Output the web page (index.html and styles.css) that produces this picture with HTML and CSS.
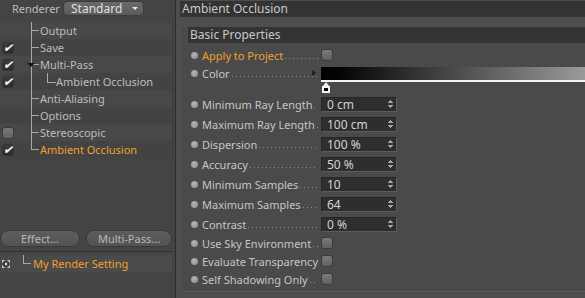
FILE: index.html
```html
<!DOCTYPE html>
<html lang="en">
<head>
    <meta charset="UTF-8">
    <title>Render Settings</title>
    <link rel="stylesheet" href="styles.css">
</head>
<body>
    <div class="app">
        <aside class="left">
            <div class="renderer">
                <span class="renderer-label">Renderer</span>
                <div class="select">Standard<span class="caret"></span></div>
            </div>

            <ul class="tree">
                <li class="row"><span class="check off"></span><span class="gutter"></span>Output</li>
                <li class="row"><span class="check on">&#10004;</span><span class="gutter"></span>Save</li>
                <li class="row"><span class="check on">&#10004;</span><span class="gutter open"><span class="tri"></span></span>Multi-Pass</li>
                <li class="row"><span class="check on">&#10004;</span><span class="gutter child"></span>Ambient Occlusion</li>
                <li class="row"><span class="check off"></span><span class="gutter"></span>Anti-Aliasing</li>
                <li class="row"><span class="check off"></span><span class="gutter"></span>Options</li>
                <li class="row"><span class="check empty"></span><span class="gutter"></span>Stereoscopic</li>
                <li class="row active"><span class="check on">&#10004;</span><span class="gutter last"></span>Ambient Occlusion</li>
            </ul>

            <div class="buttons">
                <button class="btn btn-effect">Effect...</button>
                <button class="btn btn-pass">Multi-Pass...</button>
            </div>
            <div class="sep"></div>
            <div class="setting">
                <svg class="rs-icon" width="8" height="8" viewBox="0 0 8 8">
                    <path d="M0.5 0.5h2M5.5 0.5h2M0.5 7.5h2M5.5 7.5h2M0.5 0.5v2M0.5 5.5v2M7.5 0.5v2M7.5 5.5v2" stroke="#ddd" stroke-width="1" fill="none"/>
                    <rect x="3" y="3" width="2" height="2" fill="#ddd"/>
                </svg>
                <span class="elbow"></span>
                <span class="setting-name">My Render Setting</span>
            </div>
        </aside>

        <div class="split"></div>

        <main class="right">
            <div class="title-bar">Ambient Occlusion</div>

            <section class="group">
                <div class="group-title">Basic Properties</div>

                <div class="prop prop-short first">
                    <span class="dot"></span>
                    <span class="label orange">Apply to Project<span class="leader"></span></span>
                    <span class="box"></span>
                </div>

                <div class="prop prop-short">
                    <span class="dot"></span>
                    <span class="label">Color<span class="leader"></span></span>
                    <span class="arrow"></span>
                    <div class="gradient"></div>
                </div>
                <div class="knob-row">
                    <span class="knob"></span>
                </div>

                <div class="prop">
                    <span class="dot"></span>
                    <span class="label">Minimum Ray Length<span class="leader"></span></span>
                    <div class="field">0 cm<span class="spin"></span></div>
                </div>
                <div class="prop">
                    <span class="dot"></span>
                    <span class="label">Maximum Ray Length<span class="leader"></span></span>
                    <div class="field">100 cm<span class="spin"></span></div>
                </div>
                <div class="prop">
                    <span class="dot"></span>
                    <span class="label">Dispersion<span class="leader"></span></span>
                    <div class="field">100 %<span class="spin"></span></div>
                </div>
                <div class="prop">
                    <span class="dot"></span>
                    <span class="label">Accuracy<span class="leader"></span></span>
                    <div class="field">50 %<span class="spin"></span></div>
                </div>
                <div class="prop">
                    <span class="dot"></span>
                    <span class="label">Minimum Samples<span class="leader"></span></span>
                    <div class="field">10<span class="spin"></span></div>
                </div>
                <div class="prop">
                    <span class="dot"></span>
                    <span class="label">Maximum Samples<span class="leader"></span></span>
                    <div class="field">64<span class="spin"></span></div>
                </div>
                <div class="prop">
                    <span class="dot"></span>
                    <span class="label">Contrast<span class="leader"></span></span>
                    <div class="field">0 %<span class="spin"></span></div>
                </div>

                <div class="prop prop-check">
                    <span class="dot"></span>
                    <span class="label">Use Sky Environment<span class="leader"></span></span>
                    <span class="box"></span>
                </div>
                <div class="prop prop-check">
                    <span class="dot"></span>
                    <span class="label">Evaluate Transparency<span class="leader"></span></span>
                    <span class="box"></span>
                </div>
                <div class="prop prop-check">
                    <span class="dot"></span>
                    <span class="label">Self Shadowing Only<span class="leader"></span></span>
                    <span class="box"></span>
                </div>
            </section>
        </main>
    </div>
</body>
</html>
```

FILE: styles.css
```css
* {
    box-sizing: border-box;
}

body {
    margin: 0;
    background: #4b4b4b;
    font-family: "Noto Sans", "Liberation Sans", sans-serif;
    font-size: 11px;
    color: #c4c4c4;
}

.app {
    display: flex;
    height: 298px;
    overflow: hidden;
}

/* left side */

.left {
    width: 175px;
    background: #444;
    display: flex;
    flex-direction: column;
}

.renderer {
    height: 22px;
    display: flex;
    align-items: flex-start;
    padding-top: 1px;
}

.renderer-label {
    margin-left: 12px;
    width: 51px;
    line-height: 15px;
    color: #bdbdbd;
}

.select {
    width: 81px;
    height: 15px;
    padding-left: 7px;
    border-radius: 4px;
    background: linear-gradient(#6a6a6a, #5a5a5a);
    border: 1px solid #3c3c3c;
    color: #e0e0e0;
    font-size: 12px;
    display: flex;
    align-items: center;
}

.caret {
    margin-left: auto;
    margin-right: 5px;
    width: 0;
    height: 0;
    border-left: 3px solid transparent;
    border-right: 3px solid transparent;
    border-top: 3px solid #e8e8e8;
}

.tree {
    list-style: none;
    margin: 0;
    padding: 0;
    width: 173px;
    border-right: 1px solid #3a3a3a;
}

.row {
    height: 17px;
    display: flex;
    align-items: center;
    color: #bdbdbd;
    background: #434343;
}

.row:nth-child(odd) {
    background: #484848;
}

.row.active {
    color: #f0a030;
}

.check {
    width: 12px;
    height: 12px;
    margin-left: 2px;
    border-radius: 3px;
    font-size: 12px;
    text-align: center;
    color: #f8f8f8;
}

.check.on {
    background: linear-gradient(#3a3a3a, #2c2c2c);
    border: 1px solid #333;
    line-height: 10px;
    font-style: italic;
}

.check.empty {
    background: linear-gradient(#7a7a7a, #636363);
    border: 1px solid #3b3b3b;
}

.gutter {
    width: 26px;
    height: 17px;
    position: relative;
}

.gutter::before {
    content: "";
    position: absolute;
    left: 17px;
    top: 0;
    bottom: 0;
    border-left: 1px solid #a8a8a8;
}

.gutter::after {
    content: "";
    position: absolute;
    left: 17px;
    top: 8px;
    width: 8px;
    border-top: 1px solid #a8a8a8;
}

.gutter.last::before {
    bottom: 8px;
}

.tri {
    position: absolute;
    left: 13px;
    top: 7px;
    z-index: 1;
    width: 0;
    height: 0;
    border-left: 4px solid transparent;
    border-right: 4px solid transparent;
    border-top: 4px solid #151515;
}

.gutter.child {
    width: 42px;
}

.gutter.child::after {
    left: 33px;
    top: 0;
    width: 8px;
    height: 9px;
    border-top: none;
    border-left: 1px solid #a8a8a8;
    border-bottom: 1px solid #a8a8a8;
}

.buttons {
    display: flex;
    gap: 6px;
    margin-top: 72px;
    width: 172px;
}

.btn {
    height: 17px;
    padding: 0;
    border-radius: 8px;
    border: 1px solid #393939;
    background: linear-gradient(#5c5c5c, #535353);
    color: #b8b8b8;
    font-family: inherit;
    font-size: 11px;
    line-height: 14px;
}

.btn-effect {
    width: 80px;
}

.btn-pass {
    width: 86px;
}

.sep {
    margin-top: 4px;
    height: 1px;
    width: 173px;
    background: #303030;
}

.setting {
    margin-top: 3px;
    height: 17px;
    width: 172px;
    background: #4a4a4a;
    display: flex;
    align-items: center;
}

.rs-icon {
    margin-left: 2px;
}

.elbow {
    width: 8px;
    height: 9px;
    margin: 0 2px 0 13px;
    align-self: flex-start;
    border-left: 1px solid #a8a8a8;
    border-bottom: 1px solid #a8a8a8;
}

.setting-name {
    color: #f0a030;
}

.split {
    width: 1px;
    background: #2c2c2c;
}

/* right side */

.right {
    flex: 1;
    padding-left: 4px;
    background: #4e4e4e;
}

.title-bar {
    margin-top: 1px;
    height: 16px;
    line-height: 16px;
    padding-left: 2px;
    background: #333;
    color: #c8c8c8;
    font-size: 12px;
}

.group {
    margin-top: 10px;
    margin-left: 2px;
    height: 265px;
    background: #4a4a4a;
    border-left: 1px solid #464646;
    border-bottom: 1px solid #5a5a5a;
}

.group-title {
    margin-left: 5px;
    height: 16px;
    line-height: 16px;
    padding-left: 2px;
    background: #333;
    color: #c8c8c8;
    font-size: 12px;
}

.prop {
    height: 20px;
    display: flex;
    align-items: center;
    padding-left: 8px;
}

.prop-short,
.prop-check {
    height: 18px;
}

.prop.first {
    margin-top: 3px;
}

.dot {
    width: 7px;
    height: 7px;
    border-radius: 50%;
    background: radial-gradient(circle at 40% 35%, #b4b4b4, #8a8a8a);
    margin-right: 4px;
}

.label {
    width: 116px;
    display: flex;
    align-items: center;
    white-space: nowrap;
    color: #c6c6c6;
}

.label.orange {
    color: #f0a030;
}

.leader {
    flex: 1;
    height: 12px;
    margin-left: 2px;
    background-image: linear-gradient(to right, #8c8c8c 1px, transparent 1px);
    background-size: 4px 1px;
    background-repeat: repeat-x;
    background-position: 0 9px;
}

.box {
    margin-left: 3px;
    width: 12px;
    height: 12px;
    border-radius: 3px;
    border: 1px solid #3c3c3c;
    background: linear-gradient(#7a7a7a, #606060);
}

.arrow {
    margin-left: -6px;
    margin-right: 5px;
    width: 0;
    height: 0;
    border-top: 3px solid transparent;
    border-bottom: 3px solid transparent;
    border-left: 4px solid #1e1e1e;
}

.gradient {
    flex: 1;
    height: 15px;
    margin-top: 3px;
    background: linear-gradient(to right, #000 0%, #060606 8%, #9a9a9a 100%);
    border-bottom: 2px solid #f2f2f2;
}

.knob-row {
    height: 12px;
    padding-left: 139px;
    display: flex;
}

.knob {
    width: 8px;
    height: 11px;
    background:
        linear-gradient(#000, #000) 2px 6px / 4px 3px no-repeat,
        linear-gradient(#f4f4f4, #f4f4f4) 0 4px / 8px 7px no-repeat;
    position: relative;
}

.knob::before {
    content: "";
    position: absolute;
    left: 1px;
    top: 0;
    border-left: 3px solid transparent;
    border-right: 3px solid transparent;
    border-bottom: 4px solid #f4f4f4;
}

.field {
    margin-left: 3px;
    width: 76px;
    height: 15px;
    padding-left: 5px;
    background: #2e2e2e;
    border: 1px solid #262626;
    border-right-color: #5c5c5c;
    border-bottom-color: #5c5c5c;
    color: #d2d2d2;
    font-size: 12px;
    display: flex;
    align-items: center;
}

.spin {
    margin-left: auto;
    margin-right: 3px;
    width: 5px;
    height: 10px;
    background:
        linear-gradient(to bottom right, transparent 50%, #a6a6a6 50%) 0 0 / 3px 4px no-repeat,
        linear-gradient(to bottom left, transparent 50%, #a6a6a6 50%) 2px 0 / 3px 4px no-repeat,
        linear-gradient(to top right, transparent 50%, #a6a6a6 50%) 0 6px / 3px 4px no-repeat,
        linear-gradient(to top left, transparent 50%, #a6a6a6 50%) 2px 6px / 3px 4px no-repeat;
}
```
